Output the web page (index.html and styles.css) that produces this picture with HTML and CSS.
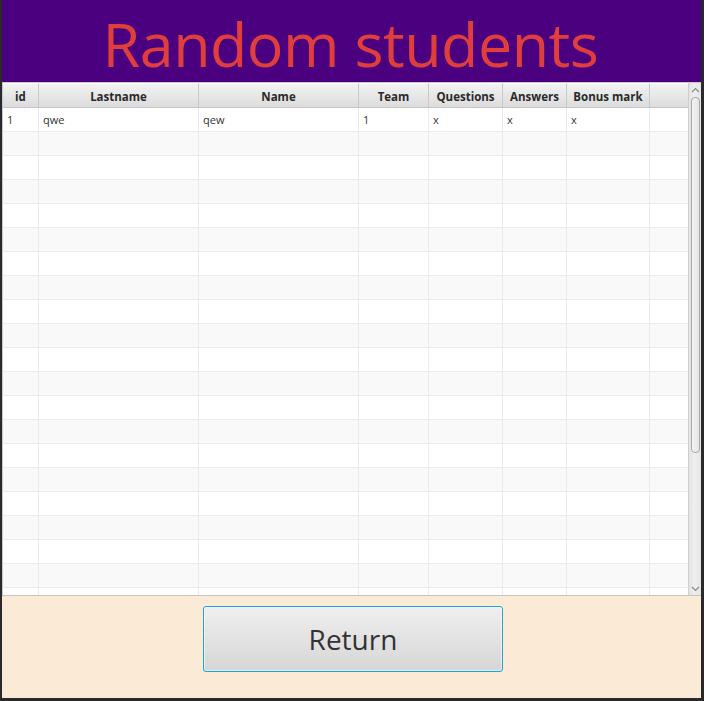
FILE: index.html
```html
<!DOCTYPE html>
<html>
<head>
<meta charset="utf-8">
<link rel="stylesheet" href="styles.css">
</head>
<body>
<div class="app">
  <header class="title-bar"><h1 class="title">Random students</h1></header>
  <div class="table-wrap">
    <div class="table">
      <div class="row head">
        <div class="c c-id">id</div>
        <div class="c c-ln">Lastname</div>
        <div class="c c-nm">Name</div>
        <div class="c c-tm">Team</div>
        <div class="c c-q">Questions</div>
        <div class="c c-a">Answers</div>
        <div class="c c-b">Bonus mark</div>
        <div class="c c-f"></div>
      </div>
      <div class="body" id="body">
        <div class="row">
          <div class="c c-id">1</div>
          <div class="c c-ln">qwe</div>
          <div class="c c-nm">qew</div>
          <div class="c c-tm">1</div>
          <div class="c c-q">x</div>
          <div class="c c-a">x</div>
          <div class="c c-b">x</div>
          <div class="c c-f"></div>
        </div>
      </div>
    </div>
    <div class="scrollbar">
      <div class="arrow up"><svg width="9" height="6" viewBox="0 0 9 6"><path d="M1 5 L4.5 1.5 L8 5" fill="none" stroke="#8a8a8a" stroke-width="1.2"/></svg></div>
      <div class="track"><div class="thumb"></div></div>
      <div class="arrow down"><svg width="9" height="6" viewBox="0 0 9 6"><path d="M1 1 L4.5 4.5 L8 1" fill="none" stroke="#8a8a8a" stroke-width="1.2"/></svg></div>
    </div>
  </div>
  <footer class="footer">
    <button class="btn">Return</button>
  </footer>
</div>
<script>
  var b = document.getElementById('body');
  var html = '';
  for (var i = 0; i < 20; i++) {
    html += '<div class="row"><div class="c c-id"></div><div class="c c-ln"></div><div class="c c-nm"></div><div class="c c-tm"></div><div class="c c-q"></div><div class="c c-a"></div><div class="c c-b"></div><div class="c c-f"></div></div>';
  }
  b.insertAdjacentHTML('beforeend', html);
</script>
</body>
</html>
```
FILE: styles.css
```css
html, body { margin: 0; padding: 0; }
body {
  background: #2a2a2c;
  width: 704px;
  height: 701px;
  overflow: hidden;
  font-family: "Open Sans", "Noto Sans", sans-serif;
}
.app {
  margin-left: 2px;
  width: 699px;
  height: 698px;
  display: flex;
  flex-direction: column;
  background: #faead6;
}
.title-bar {
  height: 82px;
  background: #4b0080;
  display: flex;
  justify-content: center;
  align-items: flex-start;
  flex: none;
}
.title {
  margin: 0;
  padding-top: 6px;
  padding-right: 2px;
  font-weight: 400;
  font-size: 61px;
  line-height: 76px;
  color: #df3e3c;
  letter-spacing: -0.5px;
}
.table-wrap {
  height: 514px;
  flex: none;
  display: flex;
  border-top: 1px solid #c8c8c8;
  border-bottom: 1px solid #c4c4c4;
  box-sizing: border-box;
  background: #ffffff;
}
.table {
  width: 686px;
  border-left: 1px solid #c8c8c8;
  box-sizing: border-box;
  overflow: hidden;
  display: flex;
  flex-direction: column;
  flex: none;
}
.row {
  display: flex;
  height: 24px;
  flex: none;
}
.row.head {
  height: 25px;
  background: linear-gradient(#f3f3f3, #dcdcdc);
  border-bottom: 1px solid #c6c6c6;
  box-sizing: border-box;
}
.head .c {
  border-right: 1px solid #c8c8c8;
  border-top: 1px solid #ffffff;
  justify-content: center;
  font-weight: 700;
  color: #2a2a2a;
  font-size: 11.5px;
  padding: 2px 0 0 0;
}
.body { display: flex; flex-direction: column; }
.body .row:nth-child(odd) { background: #ffffff; }
.body .row:nth-child(even) { background: #f9f9f9; }
.c {
  box-sizing: border-box;
  border-right: 1px solid #ebebeb;
  display: flex;
  align-items: center;
  padding-left: 4px;
  font-size: 11px;
  color: #333333;
  flex: none;
}
.body .c { border-bottom: 1px solid #ececec; }
.c-id { width: 36px; }
.c-ln { width: 160px; }
.c-nm { width: 160px; }
.c-tm { width: 70px; }
.c-q { width: 74px; }
.c-a { width: 64px; }
.c-b { width: 83px; }
.c-f { width: 38px; border-right: none; }
.head .c-f { border-right: none; }
.scrollbar {
  width: 13px;
  flex: none;
  background: linear-gradient(90deg, #e2e2e2, #eeeeee 40%, #e6e6e6);
  border-left: 1px solid #cfcfcf;
  box-sizing: border-box;
  display: flex;
  flex-direction: column;
  align-items: center;
}
.arrow {
  height: 12px;
  display: flex;
  align-items: center;
  justify-content: center;
  flex: none;
}
.arrow.up { margin-top: 1px; }
.track { flex: 1; width: 100%; display: flex; justify-content: center; }
.thumb {
  width: 9px;
  height: 356px;
  margin-top: 1px;
  border: 1px solid #a8a8a8;
  border-radius: 4px;
  box-sizing: border-box;
  background: linear-gradient(90deg, #f4f4f4, #e4e4e4);
}
.footer {
  flex: 1;
  display: flex;
  justify-content: center;
  align-items: flex-start;
  padding-top: 10px;
  padding-left: 3px;
}
.btn {
  width: 300px;
  height: 66px;
  border: 1px solid #14a6dc;
  border-radius: 3px;
  background: linear-gradient(#efefef, #d6d6d6);
  font-family: "Open Sans", "Noto Sans", sans-serif;
  font-size: 28px;
  color: #333333;
  padding: 0;
  box-shadow: inset 0 0 0 1px rgba(255,255,255,0.5);
}
```
